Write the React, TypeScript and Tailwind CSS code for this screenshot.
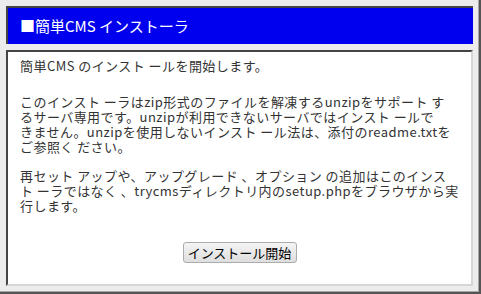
export default function App() {
  return (
    <div className="h-[294px] w-[481px] border-r-2 border-b-2 border-[#555] bg-[#ececec]">
      <div
        className="flex h-full w-full flex-col gap-[6px] border-r border-b border-[#a8a8a8] pt-[6px] pr-[5px] pb-[5px] pl-[6px] text-[#333]"
        style={{ fontFamily: '"Noto Sans CJK JP", "Noto Sans", sans-serif' }}
      >
        <header className="flex h-[38px] shrink-0 items-center border-t-2 border-l-2 border-[#444] bg-[#0000ee] pl-[12px] text-[15px] text-white">
          ■簡単CMS インストーラ
        </header>

        <main className="flex min-h-0 flex-1 flex-col border-2 border-t-[#444] border-l-[#444] border-r-[#d6d6d6] border-b-[#d6d6d6] bg-white px-[12px] pt-[6px] text-[13px] leading-[15px] tracking-[0.45px]">
          <p>簡単CMS のインスト ールを開始します。</p>

          <p className="mt-[21px]">
            このインスト ーラはzip形式のファイルを解凍するunzipをサポート す
            <br />
            るサーバ専用です。unzipが利用できないサーバではインスト ールで
            <br />
            きません。unzipを使用しないインスト ール法は、添付のreadme.txtを
            <br />
            ご参照く ださい。
          </p>

          <p className="mt-[14px]">
            再セット アップや、アップグレード 、オプション の追加はこのインス
            <br />
            ト ーラではなく 、trycmsディレクトリ内のsetup.phpをブラウザから実
            <br />
            行します。
          </p>

          <div className="mt-[29px] flex justify-center">
            <button
              type="button"
              className="h-[21px] w-[114px] rounded-[3px] border border-[#acacac] bg-gradient-to-b from-[#f4f4f4] to-[#dedede] text-[13px] leading-none tracking-normal text-black"
            >
              インストール開始
            </button>
          </div>
        </main>
      </div>
    </div>
  );
}
